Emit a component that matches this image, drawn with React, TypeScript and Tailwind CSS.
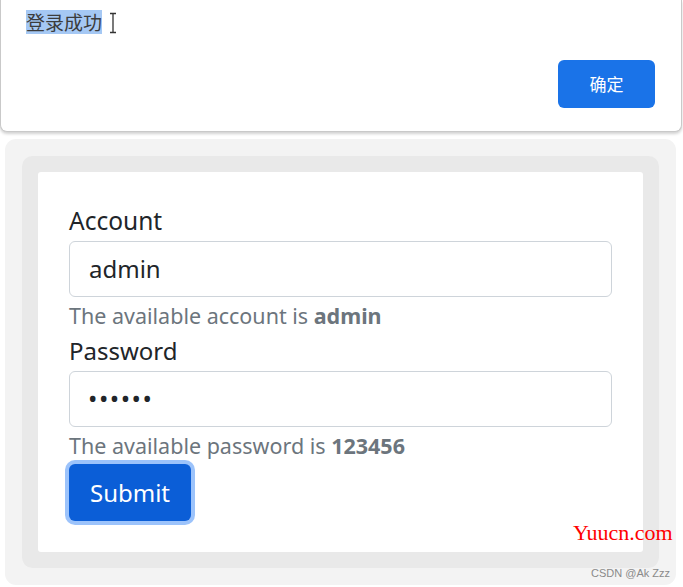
import React from "react"

function AlertDialog() {
    return (
        <div className="h-[132px] w-[682px] flex flex-col bg-white border border-t-0 border-[#c9c9c9] rounded-b-[7px] shadow-[0_2px_3px_rgba(0,0,0,0.18)]">
            <div className="pl-[25px] pt-[10px] flex flex-row items-center h-[34px]">
                <span
                    className="bg-[#a5c8f4] text-[19px] leading-[24px] text-[#3c3c3c]"
                    style={{ fontFamily: '"Noto Sans CJK SC", sans-serif' }}
                >登录成功</span>
                <svg width="10" height="22" viewBox="0 0 10 22" className="ml-[6px] mt-[1px]">
                    <path d="M2 1.5h6M5 1.5v19M2 20.5h6" stroke="#333" strokeWidth="1.3" fill="none" />
                </svg>
            </div>
            <div className="flex-1" />
            <div className="flex flex-row justify-end pr-[26px] pb-[23px]">
                <button
                    className="w-[97px] h-[48px] rounded-[6px] bg-[#1a73e8] text-white text-[17px]"
                    style={{ fontFamily: '"Noto Sans CJK SC", sans-serif' }}
                >确定</button>
            </div>
        </div>
    )
}

function LoginCard() {
    const font = { fontFamily: '"Noto Sans", "Open Sans", sans-serif' }

    return (
        <div
            className="w-[605px] h-[380px] bg-white rounded-[3px] px-[31px] pt-[34px] shadow-[0_0_0_16px_#e9e9e9,0_0_0_33px_#f3f3f3]"
            style={font}
        >
            <div className="text-[24.5px] leading-[30px] text-[#212529] mb-[5px]">Account</div>
            <div className="h-[56px] border border-[#ced4da] rounded-[6px] flex items-center px-[19px] text-[24px] text-[#212529]">
                admin
            </div>
            <div className="text-[21.5px] leading-[30px] text-[#6c757d] mt-[4px]">
                The available account is <b className="font-bold">admin</b>
            </div>
            <div className="text-[24px] leading-[30px] text-[#212529] mt-[5px] mb-[5px]">Password</div>
            <div className="h-[56px] border border-[#ced4da] rounded-[6px] flex items-center px-[18px] text-[25px] text-[#212529] tracking-[1.5px]">
                ••••••
            </div>
            <div className="text-[21.5px] leading-[30px] text-[#6c757d] mt-[4px]">
                The available password is <b className="font-bold">123456</b>
            </div>
            <button className="mt-[3px] w-[122px] h-[57px] rounded-[6px] bg-[#0b5ed7] text-white text-[24px] shadow-[0_0_0_4px_#9cc3fb]">
                Submit
            </button>
        </div>
    )
}

export default function App() {
    return (
        <main className="w-[683px] h-[587px] overflow-hidden bg-white relative">
            <AlertDialog />
            <div className="pl-[38px] pt-[40px]">
                <LoginCard />
            </div>
            <div
                className="absolute left-[573px] top-[521px] text-[22px] leading-[24px] text-[#ff0000]"
                style={{ fontFamily: '"Liberation Serif", serif' }}
            >Yuucn.com</div>
            <div
                className="absolute left-[591px] top-[565px] text-[11px] text-[#8a8a8a]"
                style={{ fontFamily: '"Liberation Sans", sans-serif' }}
            >CSDN @Ak Zzz</div>
        </main>
    )
}
